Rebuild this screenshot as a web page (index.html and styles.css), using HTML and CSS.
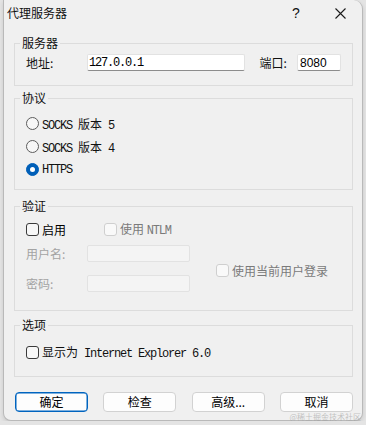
FILE: index.html
```html
<!DOCTYPE html>
<html lang="zh-CN">
<head>
    <meta charset="UTF-8">
    <meta name="viewport" content="width=device-width, initial-scale=1.0">
    <title>代理服务器</title>
    <link rel="stylesheet" href="styles.css">
</head>
<body>

    <div class="dialog">
        <div class="titlebar">
            <span class="title">代理服务器</span>
            <span class="help">?</span>
            <span class="close">
                <svg width="11" height="11" viewBox="0 0 11 11"><path d="M0.5 0.5 L10.5 10.5 M10.5 0.5 L0.5 10.5" stroke="#1a1a1a" stroke-width="1.1" fill="none"/></svg>
            </span>
        </div>

        <div class="content">
            <fieldset class="group group-server">
                <legend>服务器</legend>
                <div class="row">
                    <span class="lbl lbl-addr">地址:</span>
                    <input class="field field-addr mono" type="text" value="127.0.0.1" readonly>
                    <span class="lbl lbl-port">端口:</span>
                    <input class="field field-port" type="text" value="8080" readonly>
                </div>
            </fieldset>

            <fieldset class="group group-protocol">
                <legend>协议</legend>
                <div class="opt-row"><span class="radio"></span><span class="mono">SOCKS <span class="cjk">版本</span> 5</span></div>
                <div class="opt-row"><span class="radio"></span><span class="mono">SOCKS <span class="cjk">版本</span> 4</span></div>
                <div class="opt-row"><span class="radio on"></span><span class="mono">HTTPS</span></div>
            </fieldset>

            <fieldset class="group group-auth">
                <legend>验证</legend>
                <div class="auth-top">
                    <div class="opt-row item-enable"><span class="check"></span><span class="enable-text">启用</span></div>
                    <div class="opt-row disabled"><span class="check off"></span><span>使用 <span class="mono">NTLM</span></span></div>
                </div>
                <div class="auth-body">
                    <div class="cred">
                        <div class="cred-row"><span class="lbl dim">用户名:</span><span class="field field-off"></span></div>
                        <div class="cred-row cred-pass"><span class="lbl dim">密码:</span><span class="field field-off"></span></div>
                    </div>
                    <div class="opt-row disabled current-user"><span class="check off"></span><span>使用当前用户登录</span></div>
                </div>
            </fieldset>

            <fieldset class="group group-options">
                <legend>选项</legend>
                <div class="opt-row"><span class="check"></span><span>显示为<span class="mono"> Internet Explorer 6.0</span></span></div>
            </fieldset>

            <div class="buttons">
                <button class="btn btn-default">确定</button>
                <button class="btn">检查</button>
                <button class="btn">高级...</button>
                <button class="btn">取消</button>
            </div>
        </div>

        <div class="watermark">@稀土掘金技术社区</div>
    </div>

</body>
</html>
```

FILE: styles.css
```css
* {
    box-sizing: border-box;
}

body {
    margin: 0;
    background: #e4e4e4;
    font-family: "Noto Sans CJK SC", "Microsoft YaHei", sans-serif;
    font-size: 12px;
    color: #111;
}

.dialog {
    position: relative;
    margin-left: 3px;
    width: 360px;
    height: 421px;
    background: #f0f0f0;
    border: 1px solid #b9b9b9;
    border-top: none;
    border-radius: 0 9px 8px 8px;
    box-shadow: 0 2px 4px rgba(0, 0, 0, 0.12);
}

.titlebar {
    display: flex;
    align-items: center;
    height: 28px;
    padding-left: 3px;
}

.title {
    font-size: 12px;
    line-height: 14px;
    margin-top: -2px;
}

.help {
    margin-left: 225px;
    font-family: "Liberation Sans", sans-serif;
    font-size: 14px;
    margin-top: -2px;
}

.close {
    display: flex;
    margin-left: 35px;
    margin-top: -2px;
}

.content {
    padding-left: 10px;
}

.group {
    margin: 0;
    width: 339px;
    min-width: 0;
    border: 1px solid #dcdcdc;
    padding: 4px 11px 14px 11px;
}

.group legend {
    font-size: 12px;
    line-height: 14px;
    padding: 0 2px;
    margin-left: -6px;
}

.group-server {
    margin-top: 8px;
}

.group-protocol {
    margin-top: 5px;
    padding-top: 7px;
    padding-bottom: 8px;
}

.group-auth {
    margin-top: 9px;
    padding-top: 6px;
    padding-bottom: 18px;
}

.group-options {
    margin-top: 7px;
    padding-top: 10px;
    padding-bottom: 14px;
}

.row {
    display: flex;
    align-items: center;
    height: 17px;
}

.lbl {
    line-height: 17px;
}

.lbl-addr {
    width: 62px;
}

.lbl-port {
    width: 38px;
    margin-left: 15px;
}

.field {
    display: block;
    height: 17px;
    margin: 0;
    padding: 0 2px;
    background: #fff;
    border: 1px solid #e2e2e2;
    border-bottom-color: #8c8c8c;
    border-radius: 2px;
    font-family: "Liberation Sans", sans-serif;
    font-size: 12px;
    color: #000;
    outline: none;
}

.field-addr {
    width: 160px;
}

.field-port {
    width: 44px;
}

.mono {
    font-family: "Liberation Mono", "Noto Sans CJK SC", monospace;
    font-size: 12px;
    letter-spacing: -1.2px;
}

.mono .cjk {
    font-family: "Noto Sans CJK SC", sans-serif;
    letter-spacing: 0;
}

.field-addr.mono {
    padding-left: 1px;
}

.opt-row {
    display: flex;
    align-items: center;
    height: 23px;
}

.radio,
.check {
    width: 13px;
    height: 13px;
    margin-right: 3px;
    flex: none;
    background: #f7f7f7;
    border: 1px solid #5c5c5c;
}

.radio {
    border-radius: 50%;
}

.radio.on {
    background: #005fb8;
    border-color: #005fb8;
    display: flex;
    align-items: center;
    justify-content: center;
}

.radio.on::after {
    content: "";
    width: 5px;
    height: 5px;
    border-radius: 50%;
    background: #fff;
}

.check {
    border-radius: 3px;
    border-color: #3a3a3a;
}

.check.off {
    background: #f9f9f9;
    border-color: #cfcfcf;
}

.disabled {
    color: #7a7a7a;
}

.dim {
    color: #a3a3a3;
}

.auth-top {
    display: flex;
    height: 20px;
}

.auth-top .opt-row {
    height: 20px;
}

.item-enable {
    width: 78px;
}

.enable-text {
    color: #000;
}

.auth-body {
    display: flex;
    margin-top: 5px;
}

.cred-row {
    display: flex;
    align-items: center;
    height: 18px;
}

.cred-row .lbl {
    width: 61px;
}

.cred-pass {
    margin-top: 12px;
}

.field-off {
    width: 103px;
    background: #f4f4f4;
    border-color: #e2e2e2;
}

.current-user {
    align-self: center;
    margin-left: 26px;
    margin-top: 4px;
}

.group-options .opt-row {
    height: 20px;
}

.buttons {
    display: flex;
    justify-content: space-between;
    width: 338px;
    margin-top: 15px;
    margin-left: 1px;
}

.btn {
    width: 73px;
    height: 20px;
    padding: 0;
    background: #fdfdfd;
    border: 1px solid #d2d2d2;
    border-radius: 4px;
    font-family: "Noto Sans CJK SC", sans-serif;
    font-size: 12px;
    line-height: 16px;
    color: #000;
}

.btn-default {
    border-color: #0064bf;
    box-shadow: inset 0 0 0 0.5px #0064bf;
}

.watermark {
    position: absolute;
    right: 1px;
    top: 412px;
    font-size: 8px;
    line-height: 9px;
    color: rgba(150, 150, 150, 0.55);
    white-space: nowrap;
}
```
